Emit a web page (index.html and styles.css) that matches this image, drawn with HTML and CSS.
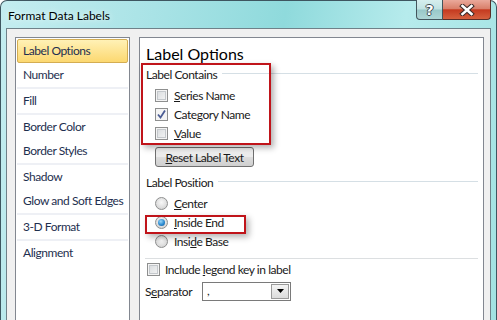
FILE: index.html
```html
<!DOCTYPE html>
<html lang="en">
<head>
    <meta charset="UTF-8">
    <title>Format Data Labels</title>
    <link rel="stylesheet" href="styles.css">
</head>
<body>
    <div class="window">
        <div class="titlebar">
            <span class="title">Format Data Labels</span>
            <div class="caption-btns">
                <div class="btn-help">?</div>
                <div class="btn-close">
                    <svg width="18" height="12" viewBox="0 0 18 12">
                        <path d="M4.5 2 L13.5 10 M13.5 2 L4.5 10" stroke="#3c2a28" stroke-width="4.6" stroke-linecap="square"/>
                        <path d="M4.5 2 L13.5 10 M13.5 2 L4.5 10" stroke="#fff" stroke-width="2.6" stroke-linecap="square"/>
                    </svg>
                </div>
            </div>
        </div>
        <div class="client">
            <ul class="nav">
                <li class="active">Label Options</li>
                <li>Number</li>
                <li class="sep"></li>
                <li>Fill</li>
                <li class="sep"></li>
                <li>Border Color</li>
                <li>Border Styles</li>
                <li class="sep"></li>
                <li>Shadow</li>
                <li>Glow and Soft Edges</li>
                <li class="sep"></li>
                <li>3-D Format</li>
                <li class="sep"></li>
                <li>Alignment</li>
            </ul>
            <div class="pane">
                <h2>Label Options</h2>
                <div class="group-title">Label Contains</div>
                <div class="opts">
                    <div class="row"><span class="check"></span><span><u>S</u>eries Name</span></div>
                    <div class="row"><span class="check on"><svg width="11" height="11" viewBox="0 0 11 11"><path d="M2 5.5 L4.5 8.5 L9 1.5" fill="none" stroke="#4b5c94" stroke-width="1.8"/></svg></span><span>Cate<u>g</u>ory Name</span></div>
                    <div class="row"><span class="check"></span><span><u>V</u>alue</span></div>
                </div>
                <div class="reset-btn"><span><u>R</u>eset Label Text</span></div>
                <div class="group-title pos">Label Position</div>
                <div class="opts">
                    <div class="row"><span class="radio"></span><span><u>C</u>enter</span></div>
                    <div class="row"><span class="radio on"></span><span><u>I</u>nside End</span></div>
                    <div class="row"><span class="radio"></span><span>Insi<u>d</u>e Base</span></div>
                </div>
                <div class="divider"></div>
                <div class="row legend"><span class="check"></span><span>Include <u>l</u>egend key in label</span></div>
                <div class="sep-row">
                    <span class="sep-label">S<u>e</u>parator</span>
                    <div class="combo">
                        <span class="combo-value">,</span>
                        <span class="combo-btn"><svg width="7" height="4" viewBox="0 0 7 4"><path d="M0 0 H7 L3.5 4 Z" fill="#000"/></svg></span>
                    </div>
                </div>
                <div class="mark mark-contains"></div>
                <div class="mark mark-inside"></div>
            </div>
        </div>
    </div>
</body>
</html>
```

FILE: styles.css
```css
body {
    margin: 0;
    width: 497px;
    height: 320px;
    overflow: hidden;
    font-family: Lato, "Noto Sans", sans-serif;
    font-size: 12px;
    letter-spacing: -0.45px;
}

.window {
    box-sizing: border-box;
    height: 320px;
    padding: 0 5px;
    border: 1px solid #3e5660;
    border-bottom: none;
    border-radius: 7px 7px 0 0;
    background: linear-gradient(100deg, #c4edf0 0%, #a9e3e6 28%, #8fdadc 52%, #b6ebec 74%, #a2e2e2 100%);
    display: flex;
    flex-direction: column;
}

.titlebar {
    height: 27px;
    display: flex;
    align-items: flex-start;
    flex-shrink: 0;
}

.title {
    padding: 7px 0 0 2px;
    font-size: 12px;
    letter-spacing: 0;
    color: #000;
    text-shadow: 0 0 6px rgba(255, 255, 255, 0.9);
}

.caption-btns {
    margin-left: auto;
    margin-top: -1px;
    display: flex;
}

.btn-help,
.btn-close {
    box-sizing: border-box;
    height: 20px;
    display: flex;
    justify-content: center;
    align-items: center;
    border: 1px solid #42555c;
    border-top: none;
}

.btn-help {
    width: 27px;
    border-radius: 0 0 0 4px;
    background: linear-gradient(#d6eeee 0%, #c0e2e2 48%, #98c8c9 52%, #aed6d6 100%);
    color: #fff;
    font-weight: bold;
    font-size: 14px;
    letter-spacing: 0;
    font-family: "DejaVu Sans", sans-serif;
    text-shadow: 1px 0 0 #3a4a50, -1px 0 0 #3a4a50, 0 1px 0 #3a4a50, 0 -1px 0 #3a4a50;
}

.btn-close {
    width: 48px;
    border-left: none;
    border-color: #5a2d27;
    border-radius: 0 0 4px 0;
    background: linear-gradient(#eaa99b 0%, #d9806b 45%, #c53a20 52%, #d6603e 100%);
}

.client {
    flex: 1;
    display: flex;
    gap: 9px;
    padding: 8px 6px 0 8px;
    background: #f0f0f0;
    border: 1px solid #6f8189;
    border-bottom: none;
}

.nav {
    list-style: none;
    margin: 0;
    padding: 1px;
    width: 115px;
    box-sizing: border-box;
    background: #fff;
    border: 1px solid #828790;
    border-bottom: none;
    color: #1e2f4f;
}

.nav li {
    height: 24px;
    line-height: 24px;
    padding-left: 6px;
    white-space: nowrap;
}

.nav li.active {
    box-sizing: border-box;
    padding-left: 5px;
    line-height: 22px;
    border: 1px solid #d4ad52;
    border-radius: 2px;
    background: linear-gradient(#fff1b6, #fcd870);
}

.nav li.sep {
    height: 2px;
    background: #eef0f5;
}

.pane {
    flex: 1;
    position: relative;
    padding: 6px 5px 0 6px;
    background: #fff;
    border: 1px solid #828790;
    border-bottom: none;
    color: #1a1a1a;
}

.pane h2 {
    margin: 0;
    font-size: 16px;
    font-weight: normal;
    letter-spacing: 0;
    line-height: 20px;
    color: #000;
}

.group-title {
    height: 20px;
    display: flex;
    align-items: center;
}

.group-title::after {
    content: '';
    flex: 1;
    height: 1px;
    margin: 0 0 1px 5px;
    background: #d5dfe5;
}

.group-title.pos {
    margin-top: 5px;
}

.opts {
    margin-top: 2px;
    padding-left: 9px;
}

.row {
    height: 19px;
    display: flex;
    align-items: center;
    gap: 6px;
}

.check,
.radio {
    box-sizing: border-box;
    width: 13px;
    height: 13px;
    flex-shrink: 0;
    display: flex;
    justify-content: center;
    align-items: center;
}

.check {
    border: 1px solid #8e8f8f;
    background: linear-gradient(135deg, #d6d9dc, #f7f7f7);
    box-shadow: inset 0 0 0 1px #f4f4f4, inset 0 0 0 2px #c4c8cc;
}

.check.on {
    background: #f4f4f4;
    box-shadow: none;
}

.radio {
    border: 1px solid #8e8f8f;
    border-radius: 50%;
    background: radial-gradient(circle at 50% 40%, #f8f8f8 0%, #e0e0e0 55%, #c8c8c8 100%);
}

.radio.on::after {
    content: '';
    width: 7px;
    height: 7px;
    border-radius: 50%;
    background: radial-gradient(circle at 40% 35%, #9ad6f8 0%, #2b8ad0 55%, #0e4f8f 100%);
}

.reset-btn {
    box-sizing: border-box;
    width: 99px;
    height: 20px;
    margin: 4px 0 0 9px;
    display: flex;
    justify-content: center;
    align-items: center;
    border: 1px solid #707070;
    border-radius: 3px;
    background: linear-gradient(#f2f2f2 0%, #ebebeb 48%, #dddddd 52%, #cfcfcf 100%);
}

.divider {
    height: 1px;
    margin: 7px 0 1px -1px;
    background: #dcdfe1;
}

.legend {
    padding-left: 1px;
    gap: 5px;
}

.sep-row {
    margin-top: 2px;
    height: 20px;
    display: flex;
    align-items: center;
}

.sep-label {
    width: 57px;
    margin-left: -1px;
}

.combo {
    box-sizing: border-box;
    width: 89px;
    height: 19px;
    display: flex;
    border: 1px solid #7a7a7a;
    background: #fff;
}

.combo-value {
    flex: 1;
    padding-left: 4px;
    line-height: 15px;
}

.combo-btn {
    box-sizing: border-box;
    width: 18px;
    margin: 1px;
    display: flex;
    justify-content: center;
    align-items: center;
    border: 1px solid #9a9a9a;
    background: linear-gradient(#f4f4f4, #dcdcdc);
}

/* red annotation boxes */
.mark {
    position: absolute;
    box-sizing: border-box;
    border: 2px solid #c0141a;
    box-shadow: 3px 3px 6px rgba(0, 0, 0, 0.3);
    pointer-events: none;
}

.mark-contains {
    left: 1px;
    top: 25px;
    width: 130px;
    height: 82px;
}

.mark-inside {
    left: 5px;
    top: 177px;
    width: 101px;
    height: 19px;
}
```
